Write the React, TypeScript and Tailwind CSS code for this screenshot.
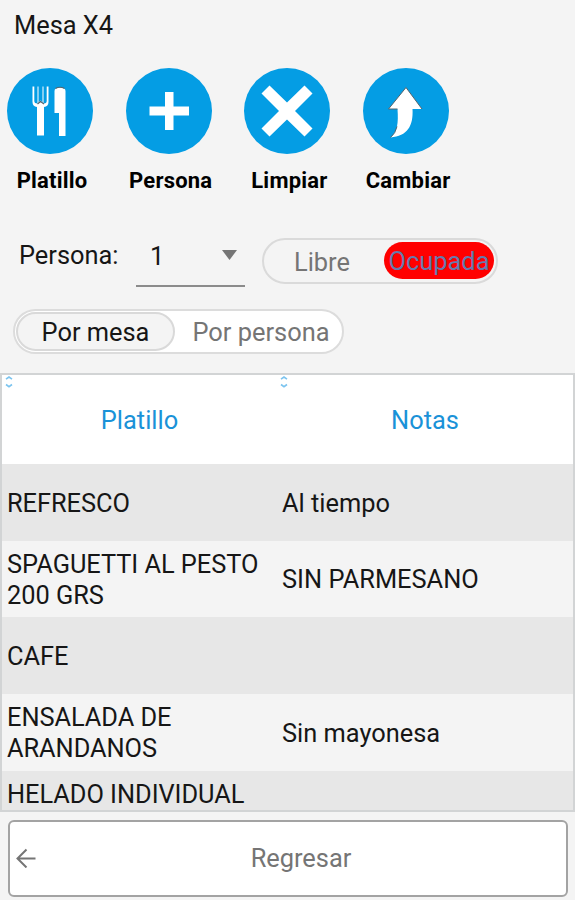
import { useState } from "react";
import type { ReactNode } from "react";
import clsx from "clsx";

type Order = { dish: string; notes: string };

const ORDERS: Order[] = [
  { dish: "REFRESCO", notes: "Al tiempo" },
  { dish: "SPAGUETTI AL PESTO 200 GRS", notes: "SIN PARMESANO" },
  { dish: "CAFE", notes: "" },
  { dish: "ENSALADA DE ARANDANOS", notes: "Sin mayonesa" },
  { dish: "HELADO INDIVIDUAL", notes: "" },
];

function ActionButton({ label, children }: { label: string; children: ReactNode }) {
  return (
    <button className="flex w-[90px] flex-col items-center">
      <svg viewBox="0 0 86 86" className="-ml-1 h-[86px] w-[86px]">
        <circle cx="43" cy="43" r="43" fill="#049de4" />
        {children}
      </svg>
      <span className="mt-3 text-[22px] leading-[30px] font-bold tracking-[0.2px] whitespace-nowrap">{label}</span>
    </button>
  );
}

function SortIcon() {
  return (
    <svg viewBox="0 0 8 12" fill="none" stroke="#7cc4ef" strokeWidth="1.6" className="absolute top-px left-[3px] h-3 w-2">
      <path d="M1 3.2 4 1 7 3.2M1 8.500 4 10.700 7 8.500" />
    </svg>
  );
}

function HeaderCell({ title }: { title: string }) {
  return (
    <div className="relative flex items-center justify-center pt-0.5 text-[#1a92d8]">
      <SortIcon />
      {title}
    </div>
  );
}

export default function App() {
  const [view, setView] = useState<"mesa" | "persona">("mesa");
  const [busy, setBusy] = useState(true);

  return (
    <div className="flex h-[900px] w-[575px] flex-col overflow-hidden bg-[#f4f4f4] font-[Roboto,sans-serif] text-[25.4px] leading-[30.5px] text-[#161616]">
      <h1 className="mt-2.5 ml-3.5 text-[25.4px]">Mesa X4</h1>

      {/* Actions */}
      <div className="mt-[27px] ml-[7px] flex gap-[28.7px] text-black">
        <ActionButton label="Platillo">
          <path d="M25.500 18.500h1.800V33q0 2.500 3.200 2.500V18.500h1v16l2-2 2 2v-16h1v17q3.200 0 3.200-2.500V18.500h1.800V34q0 4.500-4.500 5v28.500h-7V39q-4.500-.5-4.500-5z" fill="#fff" />
          <path d="M47.500 23q0-3.500 5.500-3.500 5.500 0 5.500 3.500v45H52V45h-4.500z" fill="#fff" />
          <path d="M48.500 20.500q4.500-2.500 9 0M30.500 36l3-2.500 3.500 2.500" fill="none" stroke="#53646d" strokeWidth="1.200" />
        </ActionButton>
        <ActionButton label="Persona">
          <path d="M39 24h8.500v14.500H63v9H47.500V62H39V47.500H23.500v-9H39z" fill="#fff" />
        </ActionButton>
        <ActionButton label="Limpiar">
          <path d="m25.500 17.500 17.500 17 17.500-17 8 8-17.500 17.500 17.500 17.500-8 8-17.500-17-17.500 17-8-8L35 43 17.500 25.500z" fill="#fff" />
        </ActionButton>
        <ActionButton label="Cambiar">
          <path d="M34.500 41h-9l17.500-21.500L59 41h-9.500c1 17-5 27-22 28.500 7-6 8-14 7-28.500z" fill="#fff" />
          <path d="M34.500 41h-9l17.500-21.500L59 41M27.500 69.500q5-4 6.500-11" fill="none" stroke="#53646d" strokeWidth="1" />
        </ActionButton>
      </div>

      {/* Guest picker and table status */}
      <div className="mt-[42px] flex h-12">
        <label className="mt-0.5 ml-[19px] w-[117px]">Persona:</label>
        <button className="flex h-[49px] w-[109px] items-start justify-between border-b-2 border-[#8b8b8b] pr-2 pl-3.5">
          <span className="mt-[3px]">1</span>
          <svg viewBox="0 0 15 10" className="mt-3 h-2.5 w-[15px]">
            <path d="M0 0h15L7.500 10z" fill="#757575" />
          </svg>
        </button>
        <div className="ml-[17px] flex h-[46px] w-[236px] rounded-full border-2 border-[#dadada] p-0.5">
          <button onClick={() => setBusy(false)} className="flex-1 pt-1 pr-1.5 text-[#757575]">
            Libre
          </button>
          <button
            onClick={() => setBusy(true)}
            className={clsx(
              "flex h-[37px] w-[110px] items-center justify-center rounded-full pt-[3px]",
              busy ? "bg-[#ff0000] text-[#667aae]" : "text-[#757575]"
            )}
          >
            Ocupada
          </button>
        </div>
      </div>

      <div className="mt-[23px] ml-[13px] flex h-[45px] w-[331px] rounded-full border-2 border-[#dcdcdc] bg-white p-px">
        <button
          onClick={() => setView("mesa")}
          className={clsx("h-[39px] w-[159px] rounded-full border-2 pt-0.5", view === "mesa" ? "border-[#d9d9d9] bg-[#f4f4f4]" : "border-transparent text-[#757575]")}
        >
          Por mesa
        </button>
        <button onClick={() => setView("persona")} className={clsx("flex-1 pt-0.5 pl-1.5", view === "mesa" && "text-[#757575]")}>
          Por persona
        </button>
      </div>

      {/* Orders */}
      <div className="mt-[19px] h-[439px] shrink-0 overflow-hidden border-2 border-[#d2d4d5]">
        <div className="grid h-[89.5px] grid-cols-[275px_1fr] bg-white">
          <HeaderCell title="Platillo" />
          <HeaderCell title="Notas" />
        </div>
        {ORDERS.map((order, i) => (
          <div
            key={order.dish}
            className={clsx(
              "grid grid-cols-[275px_1fr] items-center px-[5px] pt-px",
              i === ORDERS.length - 1 ? "h-[45px]" : "h-[76.7px]",
              i % 2 === 0 ? "bg-[#e7e7e7]" : "bg-[#f4f4f4]"
            )}
          >
            <span className="pr-2 tracking-[-0.05px]">{order.dish}</span>
            <span>{order.notes}</span>
          </div>
        ))}
      </div>

      <button className="relative mt-2 ml-2 h-[77px] w-[560px] shrink-0 rounded-md border-2 border-[#a3a3a3] bg-white pl-[26px] text-[#757575]">
        <svg viewBox="0 0 20 20" fill="none" stroke="#757575" strokeWidth="2" className="absolute top-[26px] left-[6px] h-5 w-5">
          <path d="M19.500 10.500h-18M10.500 1.500l-9 9 9 9" />
        </svg>
        Regresar
      </button>
    </div>
  );
}
